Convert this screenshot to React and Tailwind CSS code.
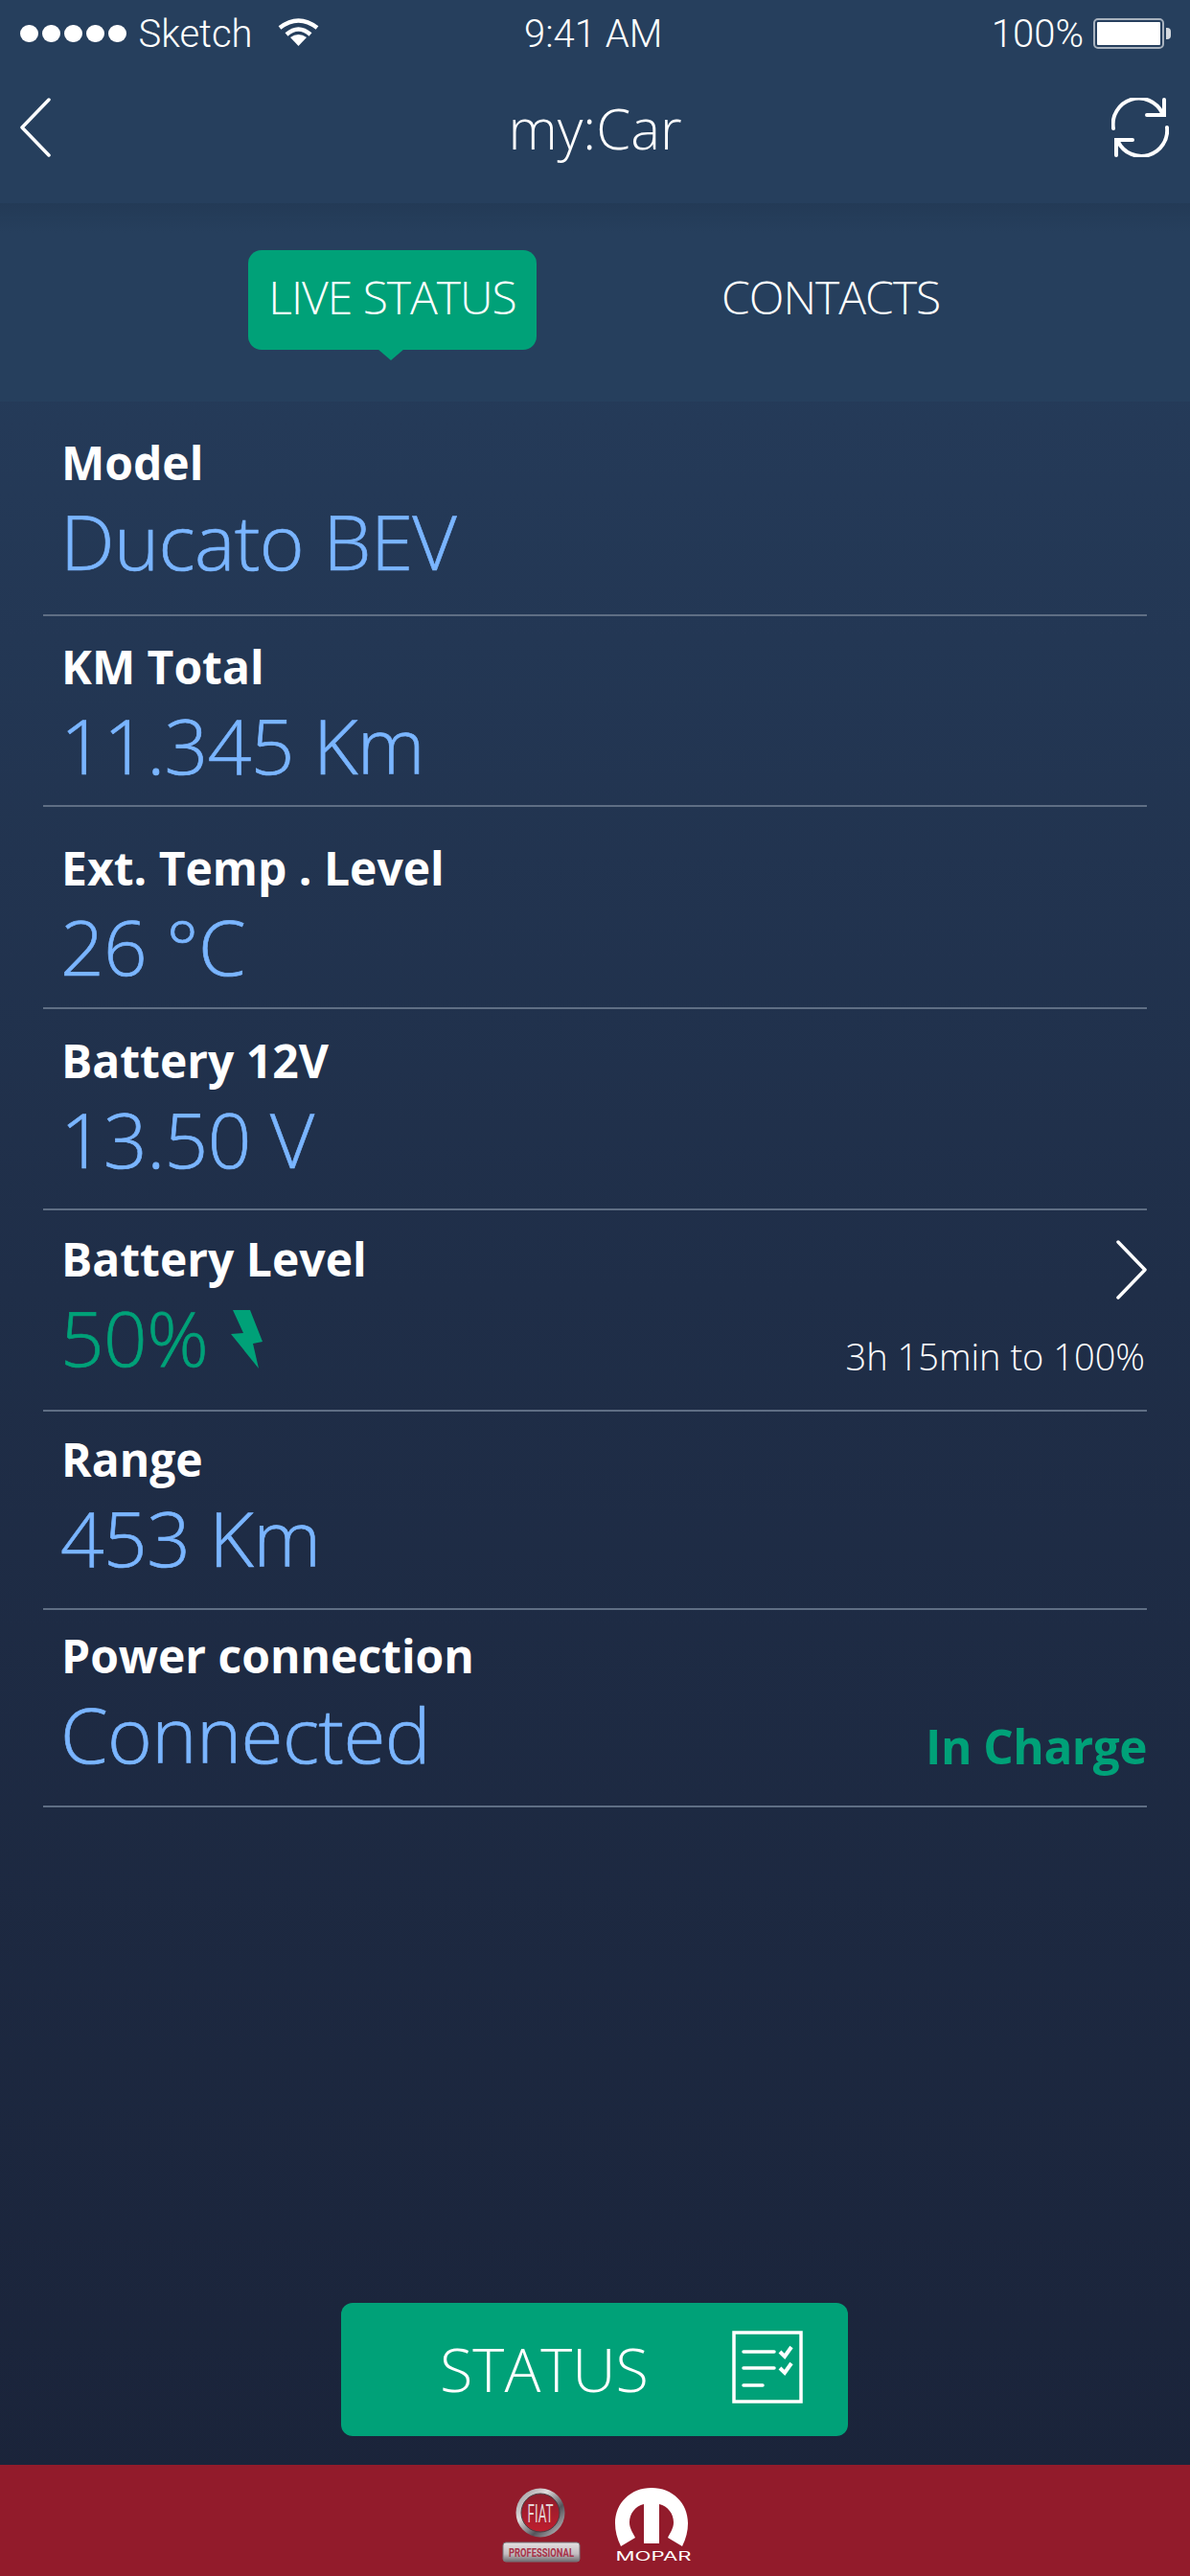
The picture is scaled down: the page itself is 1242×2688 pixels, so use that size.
const rows = [
  { label: 'Model', value: 'Ducato BEV', height: 'h-[224px]', pad: 'pt-[38px]' },
  { label: 'KM Total', value: '11.345 Km', height: 'h-[199px]', pad: 'pt-[27px]' },
  { label: 'Ext. Temp . Level', value: '26 °C', height: 'h-[211px]', pad: 'pt-[38px]' },
  { label: 'Battery 12V', value: '13.50 V', height: 'h-[210px]', pad: 'pt-[28px]' },
  { label: 'Battery Level', value: '50%', height: 'h-[210px]', pad: 'pt-[25px]', battery: true },
  { label: 'Range', value: '453 Km', height: 'h-[207px]', pad: 'pt-[24px]' },
  { label: 'Power connection', value: 'Connected', height: 'h-[206px]', pad: 'pt-[22px]', charge: true },
];

const Wifi = () => (
  <svg width="43" height="30" viewBox="0 0 43 30" fill="none" stroke="#fff" strokeWidth="4.5">
    <path d="M2 11 Q21.5 -4 41 11" />
    <path d="M9 18 Q21.5 7 34 18" />
    <path d="M21.5 30 L13 21 Q21.5 15 30 21 Z" fill="#fff" stroke="none" />
  </svg>
);

const Chevron = ({ flip }) => (
  <svg width="32" height="62" viewBox="0 0 32 62" fill="none" stroke="#fff" strokeWidth="3.5" strokeLinecap="round" strokeLinejoin="round">
    <path d={flip ? 'M2 2 L30 31 L2 60' : 'M30 2 L2 31 L30 60'} />
  </svg>
);

const Refresh = () => (
  <svg width="60" height="62" viewBox="0 0 60 62" fill="none" stroke="#fff" strokeWidth="4" strokeLinecap="round">
    <path d="M2 32 A 27 27 0 0 1 53 16" />
    <path d="M55 2 V18 H37" />
    <path d="M58 31 A 27 27 0 0 1 7 46" />
    <path d="M5 60 V44 H22" />
  </svg>
);

const Bolt = () => (
  <svg width="34" height="62" viewBox="0 0 34 62" fill="#00a178">
    <path d="M2 0 H20 L33 33 L23 35 L29 61 L0 25 L13 24 Z" />
  </svg>
);

const StatusIcon = () => (
  <svg width="74" height="76" viewBox="0 0 74 76" fill="none" stroke="#fff" strokeWidth="3.5">
    <rect x="2" y="2" width="70" height="72" />
    <path d="M12 22 H44 M12 39 H44 M12 57 H32" strokeLinecap="round" />
    <path d="M50 22 L55 27 L62 17 M50 39 L55 44 L62 34" strokeWidth="4" />
  </svg>
);

const FiatLogo = () => (
  <svg width="82" height="78" viewBox="0 0 82 78" className="overflow-visible">
    <defs>
      <linearGradient id="fiatRing" x1="0" y1="0" x2="1" y2="1">
        <stop offset="0" stopColor="#8d8a8f" />
        <stop offset="0.35" stopColor="#e0dcdd" />
        <stop offset="0.65" stopColor="#55545a" />
        <stop offset="1" stopColor="#d8d5d7" />
      </linearGradient>
      <linearGradient id="fiatDisc" x1="0" y1="0" x2="0" y2="1">
        <stop offset="0" stopColor="#8c1c2c" />
        <stop offset="1" stopColor="#bf1e2e" />
      </linearGradient>
      <linearGradient id="fiatPlate" x1="0" y1="0" x2="0" y2="1">
        <stop offset="0" stopColor="#e4e0e2" />
        <stop offset="0.6" stopColor="#c3bcc0" />
        <stop offset="1" stopColor="#6f6c70" />
      </linearGradient>
    </defs>
    <circle cx="40" cy="26" r="25.5" fill="url(#fiatRing)" />
    <circle cx="40" cy="26" r="20" fill="url(#fiatDisc)" stroke="#4a3f44" strokeWidth="1" />
    <text x="40" y="36" textAnchor="middle" fontFamily="Roboto, sans-serif" fontSize="26" fill="#e3d5d6" textLength="27" lengthAdjust="spacingAndGlyphs">FIAT</text>
    <rect x="1" y="57" width="80" height="20" rx="3" fill="url(#fiatPlate)" stroke="#77757a" />
    <text x="41" y="71.5" textAnchor="middle" fontFamily="Roboto, sans-serif" fontWeight="700" fontSize="13" fill="#a83248" textLength="68" lengthAdjust="spacingAndGlyphs">PROFESSIONAL</text>
  </svg>
);

const MoparLogo = () => (
  <svg width="82" height="78" viewBox="0 0 82 78" fill="#fff" className="overflow-visible">
    <path d="M38 0 C60 0 76 16 76 37 C76 45 74 53 70 61 L55 52 C58 46 61 42 61 36 C61 27 55 19 46 17 V58 H30 V17 C21 19 15 27 15 36 C15 42 18 46 21 52 L6 61 C2 53 0 45 0 37 C0 16 16 0 38 0 Z" />
    <text x="40" y="76" textAnchor="middle" fontFamily="Inter, sans-serif" fontWeight="400" fontSize="12.5" textLength="79" lengthAdjust="spacingAndGlyphs">MOPAR</text>
  </svg>
);

const App = () => {
  return (
    <div className="w-[1242px] h-[2688px] flex flex-col text-white font-['Open_Sans',sans-serif] bg-gradient-to-b from-[#274060] via-[#1f2e48] to-[#1a2339]">
      {/* Status bar + nav */}
      <div className="h-[212px] bg-[#263f5d] flex flex-col">
        <div className="h-[70px] pl-[21px] pr-[20px] flex items-center justify-between relative font-['Roboto',sans-serif] font-light text-[40px]">
          <div className="flex items-center">
            <div className="flex gap-[4.5px]">
              {[0, 1, 2, 3, 4].map((i) => (
                <span key={i} className="w-[18.5px] h-[18.5px] rounded-full bg-white"></span>
              ))}
            </div>
            <span className="ml-[13px] mt-[2px]">Sketch</span>
            <span className="ml-[26px] -mt-[4px]"><Wifi /></span>
          </div>
          <span className="absolute left-[547px] mt-[2px]">9:41 AM</span>
          <div className="flex items-center">
            <span className="mt-[2px]">100%</span>
            <div className="ml-[10px] w-[74px] h-[32px] border-2 border-white/60 rounded-[5px] p-[2px] flex">
              <div className="flex-1 bg-white rounded-[1px]"></div>
            </div>
            <div className="ml-[2px] w-[5px] h-[12px] bg-white/80 rounded-r-sm"></div>
          </div>
        </div>
        <div className="h-[130px] pl-[21px] pr-[22px] flex items-center justify-between relative">
          <span className="mb-[5px]"><Chevron /></span>
          <span className="absolute left-0 right-0 pb-[4px] text-center text-[58px] font-light">my:Car</span>
          <span className="mb-[5px]"><Refresh /></span>
        </div>
      </div>

      {/* Tabs */}
      <div className="h-[207px] bg-gradient-to-b from-[#233a56] to-[#263f5d] to-[15%] flex items-start pt-[49px]">
        <div className="ml-[259px] w-[301px] h-[104px] bg-[#00a178] rounded-[14px] flex items-center justify-center relative text-[48px] font-light tracking-[-1px] pb-[6px]">
          LIVE STATUS
          <span className="absolute top-[103px] left-[135px] w-0 h-0 border-x-[14px] border-x-transparent border-t-[12px] border-t-[#00a178]"></span>
        </div>
        <div className="ml-[193px] h-[104px] flex items-center text-[48px] font-light tracking-[-1px] pb-[6px]">CONTACTS</div>
      </div>

      {/* Rows */}
      <div className="px-[45px]">
        {rows.map((row) => (
          <div key={row.label} className={`${row.height} ${row.pad} border-b-2 border-[#5f6e84] relative`}>
            <div className="pl-[19px] text-[48px] leading-[52px] font-bold">{row.label}</div>
            <div className={`pl-[18px] mt-[11px] text-[80px] leading-[88px] font-light tracking-[-0.6px] [-webkit-text-stroke:0.7px_currentColor] flex items-center ${row.battery ? 'text-[#00a178]' : 'text-[#7ab5ff]'}`}>
              {row.value}
              {row.battery && <span className="ml-[24px] mt-[6px]"><Bolt /></span>}
            </div>
            {row.battery && (
              <>
                <span className="absolute right-0 top-[31px]"><Chevron flip /></span>
                <span className="absolute right-[2px] top-[124px] text-[38px] font-light">3h 15min to 100%</span>
              </>
            )}
            {row.charge && (
              <span className="absolute right-0 top-[105px] text-[49.5px] font-bold text-[#00a178] tracking-[-0.5px]">In Charge</span>
            )}
          </div>
        ))}
      </div>

      <div className="flex-1"></div>

      {/* Status button */}
      <div className="flex justify-center mb-[30px] pr-[1px]">
        <div className="w-[529px] h-[139px] bg-[#00a178] rounded-[12px] flex items-center pl-[103px] relative">
          <span className="text-[63px] font-light">STATUS</span>
          <span className="absolute left-[408px] top-[29px]"><StatusIcon /></span>
        </div>
      </div>

      {/* Brand footer */}
      <div className="h-[116px] bg-[#921b2b] flex items-start justify-center gap-[36px] pt-[24px] pl-[6px]">
        <FiatLogo />
        <MoparLogo />
      </div>
    </div>
  );
};

export default App;
